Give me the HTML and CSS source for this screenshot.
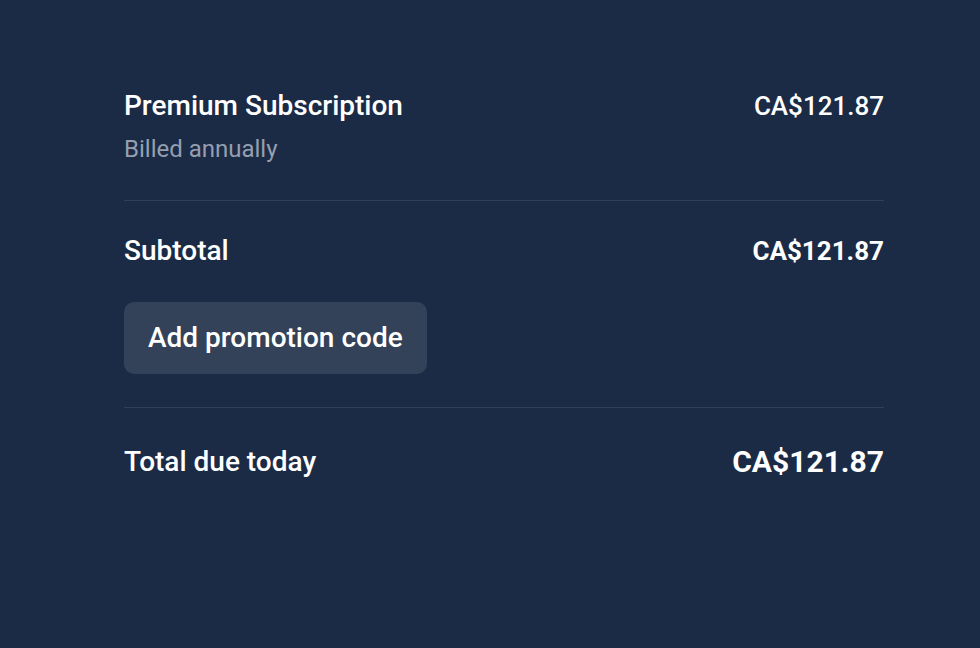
FILE: index.html
```html
<!DOCTYPE html>
<html lang="en">
<head>
    <meta charset="UTF-8">
    <meta name="viewport" content="width=device-width, initial-scale=1.0">
    <title>Order summary</title>
    <link rel="stylesheet" href="styles.css">
</head>
<body>
    <div class="summary">
        <div class="line-item">
            <div class="item-info">
                <p class="item-name">Premium Subscription</p>
                <p class="item-note">Billed annually</p>
            </div>
            <p class="item-price">CA$121.87</p>
        </div>

        <div class="subtotal-block">
            <div class="row">
                <span class="row-label">Subtotal</span>
                <span class="row-amount">CA$121.87</span>
            </div>
            <button class="promo-btn" type="button">Add promotion code</button>
        </div>

        <div class="row total-row">
            <span class="row-label">Total due today</span>
            <span class="row-amount total-amount">CA$121.87</span>
        </div>
    </div>
</body>
</html>
```

FILE: styles.css
```css
:root {
    --bg: #1b2b46;
    --text: #ffffff;
    --muted: #959fb0;
    --divider: #2f3e59;
    --button: #334259;
}

* {
    box-sizing: border-box;
    margin: 0;
    padding: 0;
}

body {
    background-color: var(--bg);
    color: var(--text);
    font-family: Roboto, "Liberation Sans", sans-serif;
    min-height: 100vh;
}

.summary {
    width: 760px;
    margin-left: 124px;
    padding-top: 90px;
}

.line-item {
    display: flex;
    justify-content: space-between;
    align-items: flex-start;
    padding-bottom: 37px;
    border-bottom: 1px solid var(--divider);
}

.item-name {
    font-size: 28px;
    font-weight: 500;
    line-height: 32px;
}

.item-note {
    margin-top: 13px;
    font-size: 24px;
    line-height: 28px;
    color: var(--muted);
}

.item-price {
    font-size: 26px;
    font-weight: 500;
    line-height: 32px;
}

.subtotal-block {
    padding: 34px 0 33px;
    border-bottom: 1px solid var(--divider);
}

.row {
    display: flex;
    justify-content: space-between;
    align-items: center;
    line-height: 32px;
}

.row-label {
    font-size: 28px;
    font-weight: 500;
}

.row-amount {
    font-size: 26px;
    font-weight: 700;
}

.promo-btn {
    margin-top: 35px;
    height: 72px;
    padding: 0 24px 2px;
    background-color: var(--button);
    color: var(--text);
    border: none;
    border-radius: 10px;
    font-family: inherit;
    font-size: 28px;
    font-weight: 500;
    cursor: pointer;
}

.total-row {
    padding-top: 36px;
    line-height: 36px;
}

.total-amount {
    font-size: 30px;
}
```
